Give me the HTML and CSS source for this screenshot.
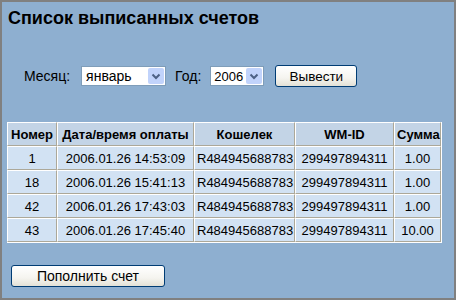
FILE: index.html
```html
<!DOCTYPE html>
<html lang="ru">
<head>
<meta charset="utf-8">
<title>Список выписанных счетов</title>
<link rel="stylesheet" href="styles.css">
</head>
<body>
<div class="page">
  <h1 class="title">Список выписанных счетов</h1>
  <form class="filter">
    <span class="label">Месяц:</span>
    <span class="select month"><span class="value">январь</span><span class="arrow"><svg width="16" height="16" viewBox="0 0 16 16"><path d="M4.5 6.5 L8 10 L11.5 6.5" fill="none" stroke="#4d6185" stroke-width="2"/></svg></span></span>
    <span class="label year-label">Год:</span>
    <span class="select year"><span class="value">2006</span><span class="arrow"><svg width="16" height="16" viewBox="0 0 16 16"><path d="M4.5 6.5 L8 10 L11.5 6.5" fill="none" stroke="#4d6185" stroke-width="2"/></svg></span></span>
    <button type="button" class="btn show-btn">Вывести</button>
  </form>
  <table class="grid">
    <thead>
      <tr><th class="c1">Номер</th><th class="c2">Дата/время оплаты</th><th class="c3">Кошелек</th><th class="c4">WM-ID</th><th class="c5">Сумма</th></tr>
    </thead>
    <tbody>
      <tr><td>1</td><td>2006.01.26 14:53:09</td><td>R484945688783</td><td>299497894311</td><td>1.00</td></tr>
      <tr><td>18</td><td>2006.01.26 15:41:13</td><td>R484945688783</td><td>299497894311</td><td>1.00</td></tr>
      <tr><td>42</td><td>2006.01.26 17:43:03</td><td>R484945688783</td><td>299497894311</td><td>1.00</td></tr>
      <tr><td>43</td><td>2006.01.26 17:45:40</td><td>R484945688783</td><td>299497894311</td><td>10.00</td></tr>
    </tbody>
  </table>
  <button type="button" class="btn add-btn">Пополнить счет</button>
</div>
</body>
</html>
```
FILE: styles.css
```css
html, body {
  margin: 0;
  padding: 0;
}
body {
  font-family: "Liberation Sans", Arial, sans-serif;
  font-size: 13px;
  color: #000;
}
.page {
  box-sizing: border-box;
  width: 456px;
  height: 300px;
  border: 2px solid #808080;
  background: #8eafd0;
  padding: 6px 5px 0 5px;
}
.title {
  margin: 0;
  font-size: 18px;
  font-weight: bold;
  line-height: 20px;
  padding-left: 1px;
}
.filter {
  display: flex;
  align-items: center;
  height: 22px;
  margin: 37px 0 0 0;
  padding-left: 17px;
}
.label {
  font-size: 14px;
}
.select {
  box-sizing: border-box;
  display: flex;
  align-items: center;
  height: 20px;
  border: 1px solid #7f9db9;
  background: #fff;
  padding: 0 1px 0 4px;
}
.select .value {
  flex: 1;
  min-width: 0;
  overflow: hidden;
  white-space: nowrap;
  font-size: 14px;
}
.select .arrow {
  flex: none;
  width: 16px;
  height: 16px;
  background: #c1d3fb;
  border-radius: 2px;
  display: flex;
  align-items: center;
  justify-content: center;
  overflow: hidden;
}
.select .arrow svg {
  display: block;
}
.month {
  width: 85px;
  margin-left: 11px;
}
.year-label {
  margin-left: 9px;
}
.year {
  width: 54px;
  margin-left: 9px;
  padding-left: 3px;
}
.year .value {
  font-size: 13px;
}
.btn {
  box-sizing: border-box;
  font-family: "Liberation Sans", Arial, sans-serif;
  font-size: 13px;
  color: #000;
  height: 22px;
  border: 1px solid #003c74;
  border-radius: 3px;
  background: linear-gradient(#ffffff 0%, #f5f4ef 60%, #e3e1d6 100%);
  padding: 0;
}
.show-btn {
  width: 82px;
  margin-left: 11px;
  font-size: 13.5px;
}
.grid {
  margin-top: 35px;
  border-collapse: separate;
  border-spacing: 0;
  border-right: 1px solid #fff;
  border-bottom: 1px solid #fff;
  table-layout: fixed;
  width: 435px;
}
.grid th, .grid td {
  box-sizing: border-box;
  height: 24px;
  padding: 0 2px;
  text-align: center;
  border-top: 1px solid #fff;
  border-left: 1px solid #fff;
  border-right: 1px solid #aca899;
  border-bottom: 1px solid #aca899;
  white-space: nowrap;
  font-size: 13px;
}
.grid th {
  background: #c3d4e6;
  font-weight: bold;
}
.grid td {
  background: #d2e2f3;
}
.c1 { width: 50px; }
.c2 { width: 137px; }
.c3 { width: 101px; }
.c4 { width: 99px; }
.c5 { width: 47px; }
.add-btn {
  display: block;
  width: 154px;
  margin: 22px 0 0 4px;
  font-size: 14px;
}
```
